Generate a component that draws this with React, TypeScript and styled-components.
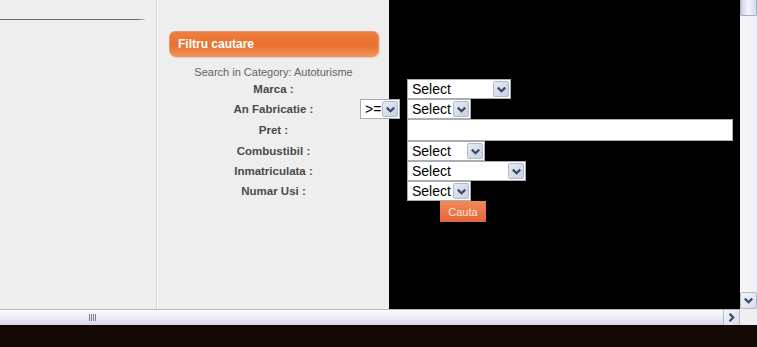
import { FC } from "react";
import styled, { createGlobalStyle } from "styled-components";

const Global = createGlobalStyle`
  html, body {
    margin: 0;
    padding: 0;
    overflow: hidden;
    background: #130806;
  }
`;

const Screen = styled.div`
  width: 757px;
  height: 347px;
  display: flex;
  flex-direction: column;
  background: #130806;
  font-family: "Liberation Sans", Arial, sans-serif;
`;

const Viewport = styled.div`
  height: 309px;
  display: flex;
`;

const Content = styled.div`
  width: 740px;
  display: flex;
`;

const LeftCol = styled.div`
  width: 156px;
  background: #efefef;
  border-right: 1px solid #d2d2d2;
`;

const TopRule = styled.div`
  width: 145px;
  height: 1px;
  margin-top: 19px;
  background: linear-gradient(90deg, #6a6a6a 0, #6a6a6a 138px, #c8c8c8 145px);
`;

const Stage = styled.div`
  flex: 1;
  border-left: 1px solid #fbfbfb;
  background: linear-gradient(90deg, #eeeeee 0, #eeeeee 231px, #000 231px);
`;

const Header = styled.div`
  margin: 31px 0 0 11px;
  width: 210px;
  height: 26px;
  box-sizing: border-box;
  border: 1px solid #e3986a;
  border-radius: 6px 6px 7px 7px;
  background: linear-gradient(180deg, #ee7f40 0%, #e8702e 55%, #f0925e 100%);
  box-shadow: 1px 1px 1px #f6c7a6;
  display: flex;
  align-items: center;
  padding-left: 8px;
  color: #fff;
  font-size: 12px;
  font-weight: bold;
`;

const Category = styled.div`
  width: 231px;
  margin-top: 9px;
  height: 13px;
  line-height: 13px;
  text-align: center;
  font-size: 11px;
  color: #636363;
`;

const FormGrid = styled.div`
  display: grid;
  grid-template-columns: 231px 1fr;
`;

const Label = styled.div<{ $h: number }>`
  height: ${(p) => p.$h}px;
  display: flex;
  align-items: center;
  justify-content: center;
  font-size: 11.5px;
  font-weight: bold;
  color: #4a4a4a;
`;

const Field = styled.div<{ $h: number }>`
  height: ${(p) => p.$h}px;
  display: flex;
  align-items: center;
  padding-left: 18px;
  gap: 7px;
`;

const SelectBox = styled.div<{ $w: number; $pull?: boolean }>`
  width: ${(p) => p.$w}px;
  height: 20px;
  box-sizing: border-box;
  border: 1px solid #a9adb3;
  background: #fff;
  display: flex;
  align-items: center;
  margin-left: ${(p) => (p.$pull ? "-47px" : "0")};
`;

const Value = styled.span`
  flex: 1;
  padding-left: 4px;
  font-size: 14px;
  color: #000;
  white-space: nowrap;
  overflow: hidden;
`;

const DropBtn = styled.span`
  width: 16px;
  height: 16px;
  margin-right: 1px;
  box-sizing: border-box;
  border: 1px solid #b4bccc;
  border-radius: 2px;
  background: linear-gradient(135deg, #e6eaf4 0%, #c9d0e0 100%);
  display: flex;
  align-items: center;
  justify-content: center;
`;

const TextInput = styled.div`
  width: 326px;
  height: 22px;
  box-sizing: border-box;
  border: 1px solid #a9adb3;
  background: #fff;
`;

const SearchButton = styled.button`
  margin-left: 33px;
  width: 46px;
  height: 21px;
  border: none;
  padding: 0;
  background: linear-gradient(180deg, #f08a58 0%, #e4673a 100%);
  color: #fde4d2;
  font-family: "Liberation Sans", Arial, sans-serif;
  font-size: 11px;
`;

const VScroll = styled.div`
  width: 17px;
  display: flex;
  flex-direction: column;
  justify-content: space-between;
  background: linear-gradient(90deg, #f7f7fb 0%, #eeeef5 100%);
`;

const VThumb = styled.div`
  height: 16px;
  box-sizing: border-box;
  border: 1px solid #a8aec2;
  border-top: none;
  border-radius: 0 0 2px 2px;
  background: linear-gradient(90deg, #c9d0ea 0%, #f3f5fc 50%, #d2d7ec 100%);
`;

const ArrowBtn = styled.div`
  width: 17px;
  height: 17px;
  box-sizing: border-box;
  border: 1px solid #b6bac8;
  border-radius: 2px;
  background: linear-gradient(135deg, #f4f5fa 0%, #d9dce8 100%);
  display: flex;
  align-items: center;
  justify-content: center;
`;

const HScrollRow = styled.div`
  height: 16px;
  display: flex;
`;

const HTrack = styled.div`
  width: 740px;
  box-sizing: border-box;
  border-top: 1px solid #b8bac4;
  background: linear-gradient(180deg, #fbfbfd 0%, #e9e9f2 60%, #d6d6e4 100%);
  display: flex;
  align-items: center;
  justify-content: space-between;
`;

const Gripper = styled.div`
  margin-left: 89px;
  width: 8px;
  height: 7px;
  background: repeating-linear-gradient(90deg, #7a7f90 0, #7a7f90 1px, transparent 1px, transparent 2px);
`;

const Corner = styled.div`
  width: 17px;
  background: #efefef;
`;

const Footer = styled.div`
  flex: 1;
  background: #130806;
`;

const Chevron: FC<{ dir?: "down" | "right"; color?: string }> = ({ dir = "down", color = "#3a4868" }) => (
  <svg width="9" height="9" viewBox="0 0 9 9">
    {dir === "down" ? (
      <path d="M0.8 2.6 L4.5 6.2 L8.2 2.6" fill="none" stroke={color} strokeWidth="2.2" />
    ) : (
      <path d="M2.6 0.8 L6.2 4.5 L2.6 8.2" fill="none" stroke={color} strokeWidth="2.2" />
    )}
  </svg>
);

const Select: FC<{ w: number; value: string; pull?: boolean }> = ({ w, value, pull }) => (
  <SelectBox $w={w} $pull={pull}>
    <Value>{value}</Value>
    <DropBtn>
      <Chevron />
    </DropBtn>
  </SelectBox>
);

export default function App() {
  return (
    <>
      <Global />
      <Screen>
        <Viewport>
          <Content>
            <LeftCol>
              <TopRule />
            </LeftCol>
            <Stage>
              <Header>Filtru cautare</Header>
              <Category>Search in Category: Autoturisme</Category>
              <FormGrid>
                <Label $h={20}>Marca :</Label>
                <Field $h={20}>
                  <Select w={104} value="Select" />
                </Field>

                <Label $h={20}>An Fabricatie :</Label>
                <Field $h={20}>
                  <Select w={40} value=">=" pull />
                  <Select w={64} value="Select" />
                </Field>

                <Label $h={22}>Pret :</Label>
                <Field $h={22}>
                  <TextInput />
                </Field>

                <Label $h={20}>Combustibil :</Label>
                <Field $h={20}>
                  <Select w={78} value="Select" />
                </Field>

                <Label $h={20}>Inmatriculata :</Label>
                <Field $h={20}>
                  <Select w={119} value="Select" />
                </Field>

                <Label $h={20}>Numar Usi :</Label>
                <Field $h={20}>
                  <Select w={64} value="Select" />
                </Field>

                <Label $h={21} />
                <Field $h={21}>
                  <SearchButton>Cauta</SearchButton>
                </Field>
              </FormGrid>
            </Stage>
          </Content>
          <VScroll>
            <VThumb />
            <ArrowBtn>
              <Chevron />
            </ArrowBtn>
          </VScroll>
        </Viewport>
        <HScrollRow>
          <HTrack>
            <Gripper />
            <ArrowBtn>
              <Chevron dir="right" />
            </ArrowBtn>
          </HTrack>
          <Corner />
        </HScrollRow>
        <Footer />
      </Screen>
    </>
  );
}
